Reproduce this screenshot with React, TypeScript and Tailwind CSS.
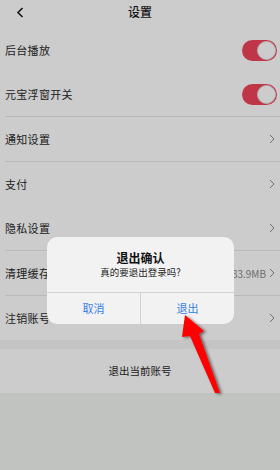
import React from "react";

const Chevron = () => (
  <svg width="6" height="10" viewBox="0 0 6 10" className="shrink-0">
    <path d="M1 1 L5 5 L1 9" fill="none" stroke="#8a8a8a" strokeWidth="1" />
  </svg>
);

const Toggle = () => (
  <div className="w-[35px] h-[21px] rounded-full bg-[#f1445c] flex items-center justify-end pr-[1px] mr-[-2px]">
    <div className="w-[19px] h-[19px] rounded-full bg-white border border-[#e2e2e2]" />
  </div>
);

type RowProps = { label: string; right?: React.ReactNode; divider?: boolean };

const Row = ({ label, right, divider }: RowProps) => (
  <div className="pl-[5px] bg-white">
    <div className="h-[44px] flex items-center justify-between pr-[5px]">
      <span className="text-[11px] text-[#2a2a2a] tracking-[0.3px]">{label}</span>
      {right}
    </div>
    {divider && <div className="h-px bg-[#e8e8e8]" />}
  </div>
);

export default function App() {
  return (
    <div
      className="relative w-[280px] h-[470px] overflow-hidden bg-[#f1f4f1]"
      style={{ fontFamily: '"Noto Sans CJK SC", "Noto Sans", sans-serif' }}
    >
      {/* header */}
      <div className="relative h-[28px] bg-white flex items-center justify-center">
        <svg
          width="8"
          height="11"
          viewBox="0 0 8 11"
          className="absolute left-[16px] top-[7px]"
        >
          <path d="M6.5 1 L2 5.5 L6.5 10" fill="none" stroke="#1a1a1a" strokeWidth="1.6" />
        </svg>
        <span className="text-[12px] font-medium text-[#1a1a1a] -mt-[4px]">设置</span>
      </div>

      <Row label="后台播放" right={<Toggle />} />
      <Row label="元宝浮窗开关" right={<Toggle />} divider />
      <Row label="通知设置" right={<Chevron />} divider />
      <Row label="支付" right={<Chevron />} />
      <Row label="隐私设置" right={<Chevron />} divider />
      <Row
        label="清理缓存"
        right={
          <div className="flex items-center gap-[3px]">
            <span className="text-[10px] text-[#8a8a8a]">33.9MB</span>
            <Chevron />
          </div>
        }
        divider
      />
      <Row label="注销账号" right={<Chevron />} />

      <div className="h-[9px] bg-[#f5f6f5]" />
      <div className="h-[44px] bg-white flex items-center justify-center">
        <span className="text-[10.5px] text-[#2a2a2a]">退出当前账号</span>
      </div>

      {/* dim overlay */}
      <div className="absolute inset-0 bg-black/20" />

      {/* dialog */}
      <div className="absolute left-[47px] top-[237px] w-[187px] h-[87px] rounded-[10px] bg-[#f2f2f2] flex flex-col overflow-hidden">
        <div className="h-[56px] flex flex-col items-center pt-[12px] border-b border-[#d2d2d2]">
          <span className="text-[12px] font-bold text-[#111] leading-[17px]">退出确认</span>
          <span className="text-[9.5px] text-[#222] leading-[14px] mt-[-1px]">真的要退出登录吗?</span>
        </div>
        <div className="flex-1 flex">
          <div className="flex-1 flex items-center justify-center border-r border-[#d2d2d2]">
            <span className="text-[11px] text-[#3a7ee6]">取消</span>
          </div>
          <div className="flex-1 flex items-center justify-center">
            <span className="text-[11px] text-[#3a7ee6]">退出</span>
          </div>
        </div>
      </div>

      {/* arrow */}
      <svg
        className="absolute left-0 top-0 pointer-events-none"
        width="280"
        height="470"
        viewBox="0 0 280 470"
      >
        <defs>
          <filter id="sh" x="-50%" y="-50%" width="200%" height="200%">
            <feDropShadow dx="2" dy="1" stdDeviation="1.8" floodColor="#000" floodOpacity="0.55" />
          </filter>
        </defs>
        <polygon
          points="185,315 204,331 199,334 220,393 215,393 190,336 182,337"
          fill="#ff0000"
          filter="url(#sh)"
        />
      </svg>
    </div>
  );
}
